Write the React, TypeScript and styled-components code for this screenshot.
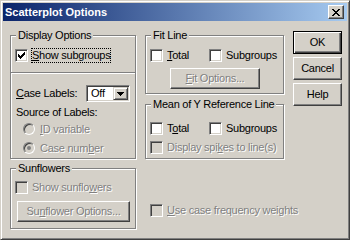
import React from "react";
import styled, { createGlobalStyle } from "styled-components";

const face = "#D4D0C8";

const Global = createGlobalStyle`
  html, body { margin: 0; padding: 0; background: ${face}; }
  body { font-family: "Liberation Sans", Arial, sans-serif; font-size: 11px; }
`;

const Window = styled.div`
  width: 350px;
  height: 240px;
  box-sizing: border-box;
  border: 1px solid;
  border-color: ${face} #404040 #404040 ${face};
  box-shadow: inset 1px 1px #fff, inset -1px -1px #808080;
  padding: 2px;
  background: ${face};
  display: flex;
  flex-direction: column;
  font-family: "Liberation Sans", Arial, sans-serif;
  font-size: 11px;
  letter-spacing: -0.25px;
  color: #000;
`;

const TitleBar = styled.div`
  height: 18px;
  flex: none;
  background: linear-gradient(to right, #0a246a, #a6caf0);
  display: flex;
  align-items: center;
  justify-content: space-between;
  padding: 0 3px 0 2px;
`;

const Title = styled.span`
  color: #fff;
  font-weight: bold;
  letter-spacing: 0;
  line-height: 18px;
`;

const CloseButton = styled.div`
  width: 16px;
  height: 14px;
  box-sizing: border-box;
  background: ${face};
  border: 1px solid;
  border-color: #fff #404040 #404040 #fff;
  box-shadow: inset -1px -1px #808080;
  display: flex;
  align-items: center;
  justify-content: center;
`;

const Body = styled.div`
  flex: 1;
  display: flex;
  align-items: flex-start;
  padding-left: 7px;
  gap: 9px;
`;

const Column = styled.div<{ $w: number; $top: number }>`
  width: ${(p) => p.$w}px;
  margin-top: ${(p) => p.$top}px;
  display: flex;
  flex-direction: column;
  flex: none;
`;

const Group = styled.div<{ $h: number; $mt?: number }>`
  position: relative;
  box-sizing: border-box;
  height: ${(p) => p.$h}px;
  margin-top: ${(p) => p.$mt ?? 0}px;
  border: 1px solid #808080;
  box-shadow: 1px 1px 0 #fff, inset 1px 1px 0 #fff;
  display: flex;
  flex-direction: column;
  padding-left: 4px;
`;

const Legend = styled.span`
  position: absolute;
  top: -7px;
  left: 5px;
  padding: 0 2px;
  background: ${face};
  line-height: 13px;
  white-space: nowrap;
`;

const Row = styled.div<{ $mt: number; $h?: number; $pl?: number }>`
  display: flex;
  align-items: center;
  height: ${(p) => p.$h ?? 15}px;
  margin-top: ${(p) => p.$mt}px;
  padding-left: ${(p) => p.$pl ?? 0}px;
  flex: none;
`;

const CheckItem = styled.div<{ $w?: number }>`
  display: flex;
  align-items: center;
  gap: 3px;
  width: ${(p) => (p.$w ? `${p.$w}px` : "auto")};
  flex: none;
`;

const Box = styled.span<{ $disabled?: boolean }>`
  width: 13px;
  height: 13px;
  box-sizing: border-box;
  border: 1px solid;
  border-color: #808080 #fff #fff #808080;
  box-shadow: inset 1px 1px #404040, inset -1px -1px ${face};
  background: ${(p) => (p.$disabled ? face : "#fff")};
  display: flex;
  align-items: center;
  justify-content: center;
  flex: none;
`;

const Label = styled.span<{ $disabled?: boolean; $focus?: boolean }>`
  padding: 1px 1px;
  line-height: 13px;
  white-space: nowrap;
  color: ${(p) => (p.$disabled ? "#808080" : "#000")};
  text-shadow: ${(p) => (p.$disabled ? "1px 1px 0 #fff" : "none")};
  outline: ${(p) => (p.$focus ? "1px dotted #000" : "none")};
  outline-offset: -1px;
`;

const Text = styled.span<{ $w?: number }>`
  line-height: 13px;
  white-space: nowrap;
  width: ${(p) => (p.$w ? `${p.$w}px` : "auto")};
  flex: none;
`;

const Divider = styled.div`
  height: 2px;
  margin: 9px 0 0 -4px;
  border-top: 1px solid #808080;
  border-bottom: 1px solid #fff;
  box-sizing: border-box;
  flex: none;
`;

const Combo = styled.div`
  width: 44px;
  height: 17px;
  box-sizing: border-box;
  border: 1px solid;
  border-color: #808080 #fff #fff #808080;
  box-shadow: inset 1px 1px #404040, inset -1px -1px ${face};
  background: #fff;
  display: flex;
  align-items: stretch;
  padding: 1px;
  flex: none;
`;

const ComboValue = styled.span`
  flex: 1;
  padding-left: 3px;
  line-height: 13px;
`;

const ComboButton = styled.span`
  width: 15px;
  box-sizing: border-box;
  background: ${face};
  border: 1px solid;
  border-color: ${face} #404040 #404040 ${face};
  box-shadow: inset 1px 1px #fff, inset -1px -1px #808080;
  display: flex;
  align-items: center;
  justify-content: center;
`;

const RadioItem = styled.div`
  display: flex;
  align-items: center;
  gap: 4px;
`;

const Radio = styled.span<{ $checked?: boolean }>`
  width: 12px;
  height: 12px;
  box-sizing: border-box;
  border-radius: 50%;
  border: 1px solid;
  border-color: #808080 #fff #fff #808080;
  box-shadow: inset 1px 1px #404040, inset -1px -1px ${face};
  background: ${face};
  display: flex;
  align-items: center;
  justify-content: center;
  flex: none;
  &::after {
    content: "";
    width: 4px;
    height: 4px;
    border-radius: 50%;
    background: #808080;
    display: ${(p) => (p.$checked ? "block" : "none")};
  }
`;

const PushButton = styled.div<{
  $w?: number;
  $h?: number;
  $mt?: number;
  $ml?: number;
  $disabled?: boolean;
  $default?: boolean;
}>`
  width: ${(p) => (p.$w ? `${p.$w}px` : "100%")};
  height: ${(p) => p.$h ?? 23}px;
  margin-top: ${(p) => p.$mt ?? 0}px;
  margin-left: ${(p) => p.$ml ?? 0}px;
  box-sizing: border-box;
  background: ${face};
  border: 1px solid;
  border-color: ${(p) => (p.$default ? "#000" : "#fff #404040 #404040 #fff")};
  box-shadow: ${(p) =>
    p.$default
      ? "inset 1px 1px #fff, inset -1px -1px #404040, inset -2px -2px #808080"
      : "inset -1px -1px #808080"};
  display: flex;
  align-items: center;
  justify-content: center;
  line-height: 13px;
  white-space: nowrap;
  flex: none;
  color: ${(p) => (p.$disabled ? "#808080" : "#000")};
  text-shadow: ${(p) => (p.$disabled ? "1px 1px 0 #fff" : "none")};
`;

const ButtonStack = styled.div`
  display: flex;
  flex-direction: column;
  gap: 3px;
`;

const CheckMark = () => (
  <svg width="7" height="7" viewBox="0 0 7 7" shapeRendering="crispEdges">
    <path
      fill="#000"
      d="M6 0h1v1h-1z M5 1h2v1h-2z M0 2h1v1h-1z M4 2h3v1h-3z M0 3h2v1h-2z M3 3h3v1h-3z M0 4h5v1h-5z M1 5h3v1h-3z M2 6h1v1h-1z"
    />
  </svg>
);

const CloseGlyph = () => (
  <svg width="8" height="7" viewBox="0 0 8 7" shapeRendering="crispEdges">
    <path
      fill="#000"
      d="M0 0h2v1h-2z M6 0h2v1h-2z M1 1h2v1h-2z M5 1h2v1h-2z M2 2h4v1h-4z M3 3h2v1h-2z M2 4h4v1h-4z M1 5h2v1h-2z M5 5h2v1h-2z M0 6h2v1h-2z M6 6h2v1h-2z"
    />
  </svg>
);

const DownArrow = () => (
  <svg width="7" height="4" viewBox="0 0 7 4" shapeRendering="crispEdges">
    <path fill="#000" d="M0 0h7v1h-7z M1 1h5v1h-5z M2 2h3v1h-3z M3 3h1v1h-1z" />
  </svg>
);

type CheckProps = {
  label: React.ReactNode;
  checked?: boolean;
  disabled?: boolean;
  focus?: boolean;
  w?: number;
};

const Check = ({ label, checked, disabled, focus, w }: CheckProps) => (
  <CheckItem $w={w}>
    <Box $disabled={disabled}>{checked && <CheckMark />}</Box>
    <Label $disabled={disabled} $focus={focus}>
      {label}
    </Label>
  </CheckItem>
);

export default function App() {
  return (
    <>
      <Global />
      <Window>
        <TitleBar>
          <Title>Scatterplot Options</Title>
          <CloseButton>
            <CloseGlyph />
          </CloseButton>
        </TitleBar>
        <Body>
          <Column $w={126} $top={14}>
            <Group $h={124}>
              <Legend>Display Options</Legend>
              <Row $mt={12}>
                <Check
                  checked
                  focus
                  label={
                    <>
                      <u>S</u>how subgroups
                    </>
                  }
                />
              </Row>
              <Divider />
              <Row $mt={11} $h={17} $pl={1}>
                <Text $w={70}>
                  <u>C</u>ase Labels:
                </Text>
                <Combo>
                  <ComboValue>Off</ComboValue>
                  <ComboButton>
                    <DownArrow />
                  </ComboButton>
                </Combo>
              </Row>
              <Row $mt={3} $h={14} $pl={1}>
                <Text>Source of Labels:</Text>
              </Row>
              <Row $mt={3} $h={14} $pl={8}>
                <RadioItem>
                  <Radio />
                  <Label $disabled>
                    <u>I</u>D variable
                  </Label>
                </RadioItem>
              </Row>
              <Row $mt={5} $h={14} $pl={8}>
                <RadioItem>
                  <Radio $checked />
                  <Label $disabled>
                    Case num<u>b</u>er
                  </Label>
                </RadioItem>
              </Row>
            </Group>
            <Group $h={61} $mt={9}>
              <Legend>Sunflowers</Legend>
              <Row $mt={11}>
                <Check
                  disabled
                  label={
                    <>
                      Show sunflo<u>w</u>ers
                    </>
                  }
                />
              </Row>
              <PushButton $w={113} $h={21} $mt={6} $ml={2} $disabled>
                <span>
                  Su<u>n</u>flower Options...
                </span>
              </PushButton>
            </Group>
          </Column>

          <Column $w={139} $top={14}>
            <Group $h={59}>
              <Legend>Fit Line</Legend>
              <Row $mt={12}>
                <Check
                  w={59}
                  label={
                    <>
                      <u>T</u>otal
                    </>
                  }
                />
                <Check label="Subgroups" />
              </Row>
              <PushButton $w={90} $h={21} $mt={5} $ml={20} $disabled>
                <span>
                  <u>F</u>it Options...
                </span>
              </PushButton>
            </Group>
            <Group $h={55} $mt={10}>
              <Legend>Mean of Y Reference Line</Legend>
              <Row $mt={16}>
                <Check
                  w={59}
                  label={
                    <>
                      T<u>o</u>tal
                    </>
                  }
                />
                <Check
                  label={
                    <>
                      Sub<u>g</u>roups
                    </>
                  }
                />
              </Row>
              <Row $mt={4}>
                <Check
                  disabled
                  label={
                    <>
                      Display spi<u>k</u>es to line(s)
                    </>
                  }
                />
              </Row>
            </Group>
            <Row $mt={44} $pl={5}>
              <Check
                disabled
                label={
                  <>
                    <u>U</u>se case frequency weights
                  </>
                }
              />
            </Row>
          </Column>

          <Column $w={49} $top={10}>
            <ButtonStack>
              <PushButton $default>OK</PushButton>
              <PushButton>Cancel</PushButton>
              <PushButton>Help</PushButton>
            </ButtonStack>
          </Column>
        </Body>
      </Window>
    </>
  );
}
